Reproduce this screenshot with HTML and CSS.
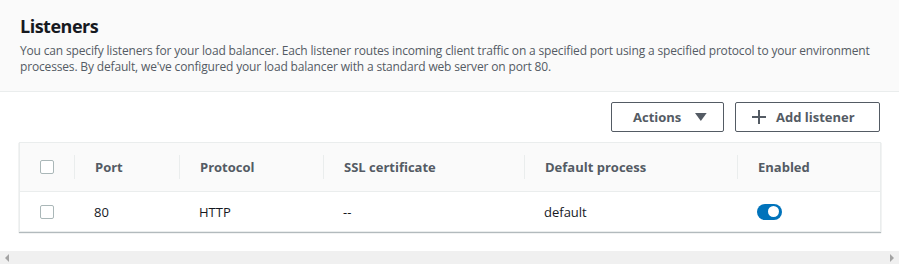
FILE: index.html
```html
<!DOCTYPE html>
<html lang="en">
<head>
    <meta charset="UTF-8">
    <meta name="viewport" content="width=device-width, initial-scale=1.0">
    <title>Listeners</title>
    <link rel="stylesheet" href="styles.css">
</head>
<body>

    <div class="header">
        <h2>Listeners</h2>
        <p>You can specify listeners for your load balancer. Each listener routes incoming client traffic on a specified port using a specified protocol to your environment processes. By default, we've configured your load balancer with a standard web server on port 80.</p>
    </div>

    <div class="content">
        <div class="toolbar">
            <button class="btn">Actions
                <svg width="12" height="10" viewBox="0 0 12 10"><path d="M0 1h12L6 9z" fill="#545b64"/></svg>
            </button>
            <button class="btn">
                <svg width="14" height="14" viewBox="0 0 14 14"><path d="M7 0v14M0 7h14" stroke="#545b64" stroke-width="2"/></svg>
                Add listener
            </button>
        </div>

        <div class="table">
            <div class="row head">
                <div class="cell"><span class="checkbox"></span></div>
                <div class="cell">Port</div>
                <div class="cell">Protocol</div>
                <div class="cell">SSL certificate</div>
                <div class="cell">Default process</div>
                <div class="cell">Enabled</div>
            </div>
            <div class="row">
                <div class="cell"><span class="checkbox"></span></div>
                <div class="cell">80</div>
                <div class="cell">HTTP</div>
                <div class="cell">--</div>
                <div class="cell">default</div>
                <div class="cell"><span class="toggle"></span></div>
            </div>
        </div>
    </div>

    <div class="scrollbar">
        <span class="arrow left"></span>
        <span class="arrow right"></span>
    </div>

</body>
</html>
```

FILE: styles.css
```css
* {
    box-sizing: border-box;
    margin: 0;
    padding: 0;
}

body {
    font-family: 'Open Sans', sans-serif;
    background-color: white;
    color: #16191f;
    width: 899px;
    height: 264px;
    overflow: hidden;
}

.header {
    background-color: #fafafa;
    border-bottom: 1px solid #eaeded;
    height: 92px;
    padding: 14px 20px 0 20px;
}

.header h2 {
    font-size: 18px;
    font-weight: bold;
    line-height: 24px;
    letter-spacing: -0.5px;
    margin-bottom: 5px;
}

.header p {
    font-size: 12px;
    line-height: 16px;
    color: #545b64;
    letter-spacing: -0.16px;
}

.content {
    padding: 10px 19px 0 19px;
}

.toolbar {
    display: flex;
    justify-content: flex-end;
    gap: 11px;
    margin-bottom: 10px;
}

.btn {
    display: flex;
    align-items: center;
    gap: 10px;
    height: 30px;
    padding: 0 20px;
    background: #fff;
    border: 1px solid #545b64;
    border-radius: 2px;
    font-family: 'Open Sans', sans-serif;
    font-size: 13px;
    font-weight: bold;
    color: #545b64;
}

.btn:first-child {
    width: 113px;
    padding: 0 16px 0 21px;
    gap: 14px;
}

.btn:last-child {
    width: 145px;
    padding: 0 16px;
}

.table {
    border: 1px solid #eaeded;
    box-shadow: 0 1px 1px rgba(0, 28, 36, 0.3);
    width: 862px;
}

.row {
    display: grid;
    grid-template-columns: 54px 105px 144px 201px 213px 1fr;
    align-items: center;
    height: 39px;
    font-size: 13px;
}

.row.head {
    height: 49px;
    background-color: #fafafa;
    border-bottom: 1px solid #eaeded;
    font-weight: bold;
    color: #545b64;
}

.cell {
    padding-left: 20px;
    display: flex;
    align-items: center;
    height: 24px;
}

.head .cell + .cell {
    border-left: 1px solid #eaeded;
}

.checkbox {
    display: inline-block;
    width: 14px;
    height: 14px;
    border: 1px solid #aab7b8;
    border-radius: 2px;
    background: #fff;
}

.toggle {
    display: inline-block;
    position: relative;
    width: 25px;
    height: 16px;
    border-radius: 8px;
    background-color: #0073bb;
}

.toggle::after {
    content: "";
    position: absolute;
    right: 3px;
    top: 2.5px;
    width: 11px;
    height: 11px;
    border-radius: 50%;
    background: #fff;
}

.scrollbar {
    margin-top: 19px;
    height: 13px;
    background-color: #f0f0f0;
    display: flex;
    justify-content: space-between;
    align-items: center;
    padding: 0 5px 0 5px;
}

.arrow {
    width: 0;
    height: 0;
    border-top: 4px solid transparent;
    border-bottom: 4px solid transparent;
}

.arrow.left {
    border-right: 4px solid #a3a3a3;
}

.arrow.right {
    border-left: 4px solid #a3a3a3;
}
```
